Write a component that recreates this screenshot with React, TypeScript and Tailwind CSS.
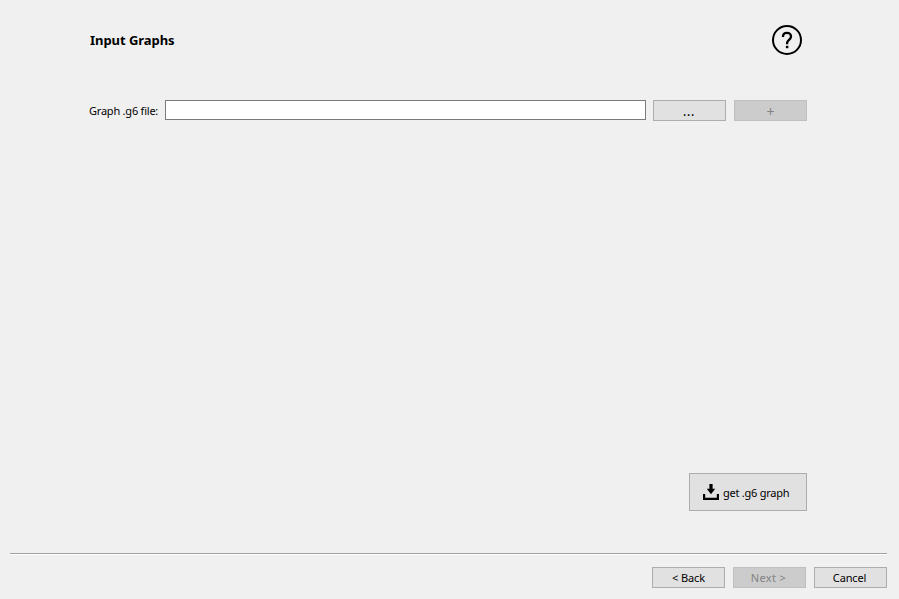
import type { ReactNode } from "react";

type ButtonProps = { children: ReactNode; disabled?: boolean; size?: string };

function Button({ children, disabled = false, size = "h-[21px] w-[73px]" }: ButtonProps) {
  const tone = disabled
    ? "border-[#bfbfbf] bg-[#cccccc] text-[#838383]"
    : "border-[#adadad] bg-[#e1e1e1] text-black";
  return (
    <button
      disabled={disabled}
      className={`flex shrink-0 items-center justify-center border whitespace-nowrap ${size} ${tone}`}
    >
      {children}
    </button>
  );
}

function HelpIcon() {
  return (
    <svg width="32" height="32" viewBox="0 0 32 32" fill="none" stroke="#000">
      <circle cx="16" cy="16" r="14" strokeWidth="2" />
      <path
        d="M12 13v-.6c0-2.2 1.7-3.6 4-3.6s4 1.5 4 3.6c0 3.1-3.9 3.7-3.9 6.6v1.2"
        strokeWidth="2.3"
      />
      <path d="M16.1 21.8v2.4" strokeWidth="2.5" />
    </svg>
  );
}

function DownloadIcon() {
  return (
    <svg width="16" height="16" viewBox="0 0 16 16" fill="none" stroke="#000">
      <path d="M8 0v6" strokeWidth="3.2" />
      <path d="M3.8 4.8h8.4L8 10.2z" fill="#000" stroke="none" />
      <path d="M1.1 10v4.8h13.8V10" strokeWidth="2.2" />
    </svg>
  );
}

export default function App() {
  return (
    <div className="flex h-[599px] w-[899px] flex-col bg-[#f0f0f0] font-['Noto_Sans','DejaVu_Sans',sans-serif] text-[11px] leading-none text-black">
      <main className="flex h-[553px] flex-col pr-[92px] pl-[90px]">
        <header className="flex items-start justify-between pt-6">
          <h1 className="pt-[10px] text-[13px] leading-none font-bold">
            <span className="tracking-[-0.05px]">Input Graphs</span>
          </h1>
          <div className="mr-1">
            <HelpIcon />
          </div>
        </header>
        <div className="mt-11 flex h-[21px] items-start">
          <label htmlFor="graph-file" className="w-[75px] shrink-0 pt-[5px] whitespace-nowrap">
            <span className="-ml-px tracking-[-0.22px]">Graph .g6 file:</span>
          </label>
          <input
            id="graph-file"
            className="h-5 w-[481px] border border-[#7a7a7a] bg-white px-1 outline-none"
          />
          <div className="ml-[7px] flex gap-2">
            <Button>
              <span className="pt-[2px] pr-px text-[12px] font-medium tracking-[0.8px]">...</span>
            </Button>
            <Button disabled>
              <span className="pt-[2px] text-[14px]">+</span>
            </Button>
          </div>
        </div>
        <div className="mt-auto mb-[42px] flex justify-end">
          <Button size="h-[38px] w-[118px]">
            <span className="flex w-[90px] items-center gap-1">
              <DownloadIcon />
              <span className="tracking-[-0.25px]">get .g6 graph</span>
            </span>
          </Button>
        </div>
      </main>
      <footer className="flex flex-col pr-3 pl-[10px]">
        <div className="h-0.5 border-t border-b border-t-[#a0a0a0] border-b-white" />
        <div className="mt-3 flex justify-end gap-2">
          <Button>
            <span className="tracking-[-0.1px]">&lt; Back</span>
          </Button>
          <Button disabled>
            <span className="pr-[2px] tracking-[0.35px]">Next &gt;</span>
          </Button>
          <Button>
            <span className="pr-[2px] tracking-[-0.15px]">Cancel</span>
          </Button>
        </div>
      </footer>
    </div>
  );
}
